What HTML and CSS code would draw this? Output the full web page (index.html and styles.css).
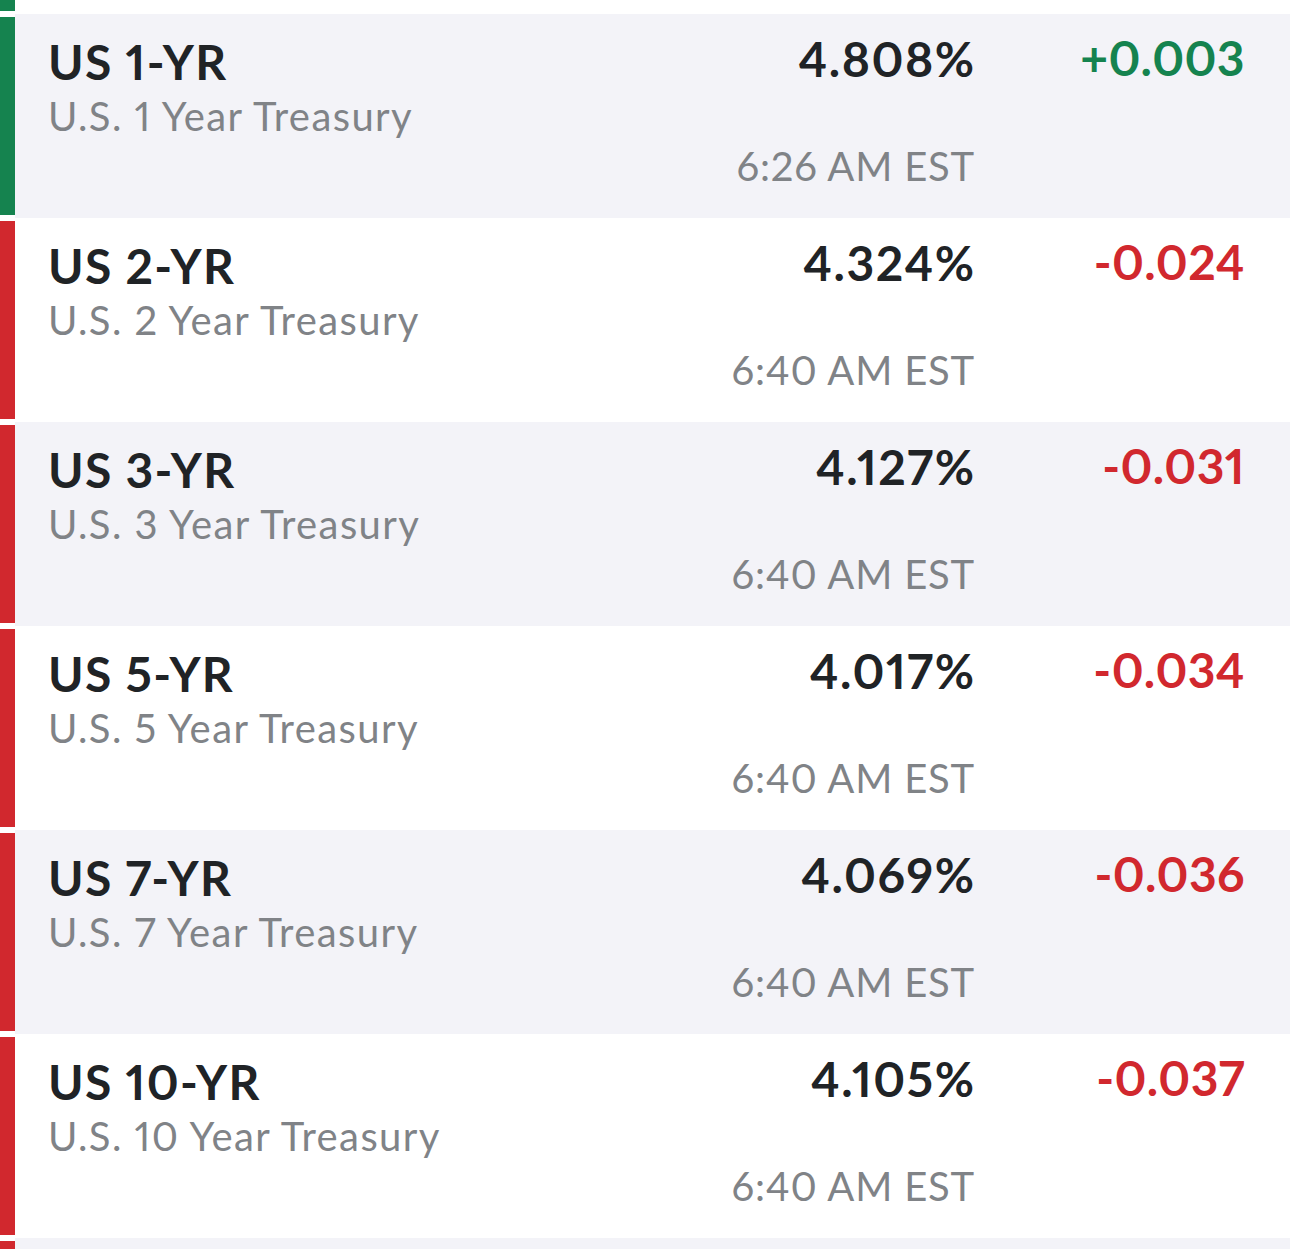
FILE: index.html
```html
<!DOCTYPE html>
<html>
<head>
<meta charset="utf-8">
<link rel="stylesheet" href="styles.css">
</head>
<body>
<div class="list">
  <div class="row partial-top">
    <div class="bar up"></div>
    <div class="content"></div>
  </div>
  <div class="row alt">
    <div class="bar up"></div>
    <div class="content">
      <div class="left">
        <div class="ticker">US 1-YR</div>
        <div class="name">U.S. 1 Year Treasury</div>
      </div>
      <div class="mid">
        <div class="price">4.808%</div>
        <div class="time">6:26 AM EST</div>
      </div>
      <div class="change pos">+0.003</div>
    </div>
  </div>
  <div class="row">
    <div class="bar down"></div>
    <div class="content">
      <div class="left">
        <div class="ticker">US 2-YR</div>
        <div class="name">U.S. 2 Year Treasury</div>
      </div>
      <div class="mid">
        <div class="price">4.324%</div>
        <div class="time">6:40 AM EST</div>
      </div>
      <div class="change neg">-0.024</div>
    </div>
  </div>
  <div class="row alt">
    <div class="bar down"></div>
    <div class="content">
      <div class="left">
        <div class="ticker">US 3-YR</div>
        <div class="name">U.S. 3 Year Treasury</div>
      </div>
      <div class="mid">
        <div class="price">4.127%</div>
        <div class="time">6:40 AM EST</div>
      </div>
      <div class="change neg">-0.031</div>
    </div>
  </div>
  <div class="row">
    <div class="bar down"></div>
    <div class="content">
      <div class="left">
        <div class="ticker">US 5-YR</div>
        <div class="name">U.S. 5 Year Treasury</div>
      </div>
      <div class="mid">
        <div class="price">4.017%</div>
        <div class="time">6:40 AM EST</div>
      </div>
      <div class="change neg">-0.034</div>
    </div>
  </div>
  <div class="row alt">
    <div class="bar down"></div>
    <div class="content">
      <div class="left">
        <div class="ticker">US 7-YR</div>
        <div class="name">U.S. 7 Year Treasury</div>
      </div>
      <div class="mid">
        <div class="price">4.069%</div>
        <div class="time">6:40 AM EST</div>
      </div>
      <div class="change neg">-0.036</div>
    </div>
  </div>
  <div class="row">
    <div class="bar down"></div>
    <div class="content">
      <div class="left">
        <div class="ticker">US 10-YR</div>
        <div class="name">U.S. 10 Year Treasury</div>
      </div>
      <div class="mid">
        <div class="price">4.105%</div>
        <div class="time">6:40 AM EST</div>
      </div>
      <div class="change neg">-0.037</div>
    </div>
  </div>
  <div class="row alt partial-bottom">
    <div class="bar down"></div>
    <div class="content"></div>
  </div>
</div>
</body>
</html>
```

FILE: styles.css
```css
* { box-sizing: border-box; }
html, body {
  margin: 0;
  padding: 0;
  background: #ffffff;
  font-family: "Lato", "Liberation Sans", sans-serif;
  font-variant-numeric: proportional-nums;
  overflow: hidden;
}
.list {
  display: flex;
  flex-direction: column;
}
.row {
  display: flex;
  height: 204px;
  background: #ffffff;
}
.row.partial-top { height: 14px; }
.row.partial-top .bar { margin-top: 0; }
.row.partial-bottom { height: 20px; }
.row.partial-bottom .bar { margin-bottom: 0; }
.bar {
  width: 15px;
  flex: 0 0 15px;
  margin: 3px 0;
}
.bar.up { background: #15834f; }
.bar.down { background: #d1282e; }
.content {
  flex: 1;
  display: grid;
  grid-template-columns: 1fr auto 270px;
  padding: 0 46px 0 33px;
}
.row.alt .content { background: #f3f3f8; }
.left {
  padding-top: 22px;
}
.ticker {
  font-size: 48px;
  line-height: 52px;
  font-weight: 700;
  color: #202326;
  letter-spacing: 1.3px;
}
.name {
  font-size: 40px;
  line-height: 52px;
  color: #808387;
  letter-spacing: 1.4px;
  margin-top: 2px;
}
.mid {
  text-align: right;
  padding-top: 19px;
}
.price {
  font-size: 48px;
  line-height: 52px;
  font-weight: 700;
  color: #202326;
  letter-spacing: 1.5px;
  margin-right: -1.5px;
}
.time {
  font-size: 40px;
  line-height: 52px;
  color: #808387;
  letter-spacing: 0.8px;
  margin-right: -1px;
  margin-top: 55px;
}
.change {
  text-align: right;
  padding-top: 18px;
  font-size: 48px;
  line-height: 52px;
  font-weight: 700;
  letter-spacing: 0.4px;
  margin-right: -1px;
}
.change.pos { color: #15834f; }
.change.neg { color: #d1282e; }
```
